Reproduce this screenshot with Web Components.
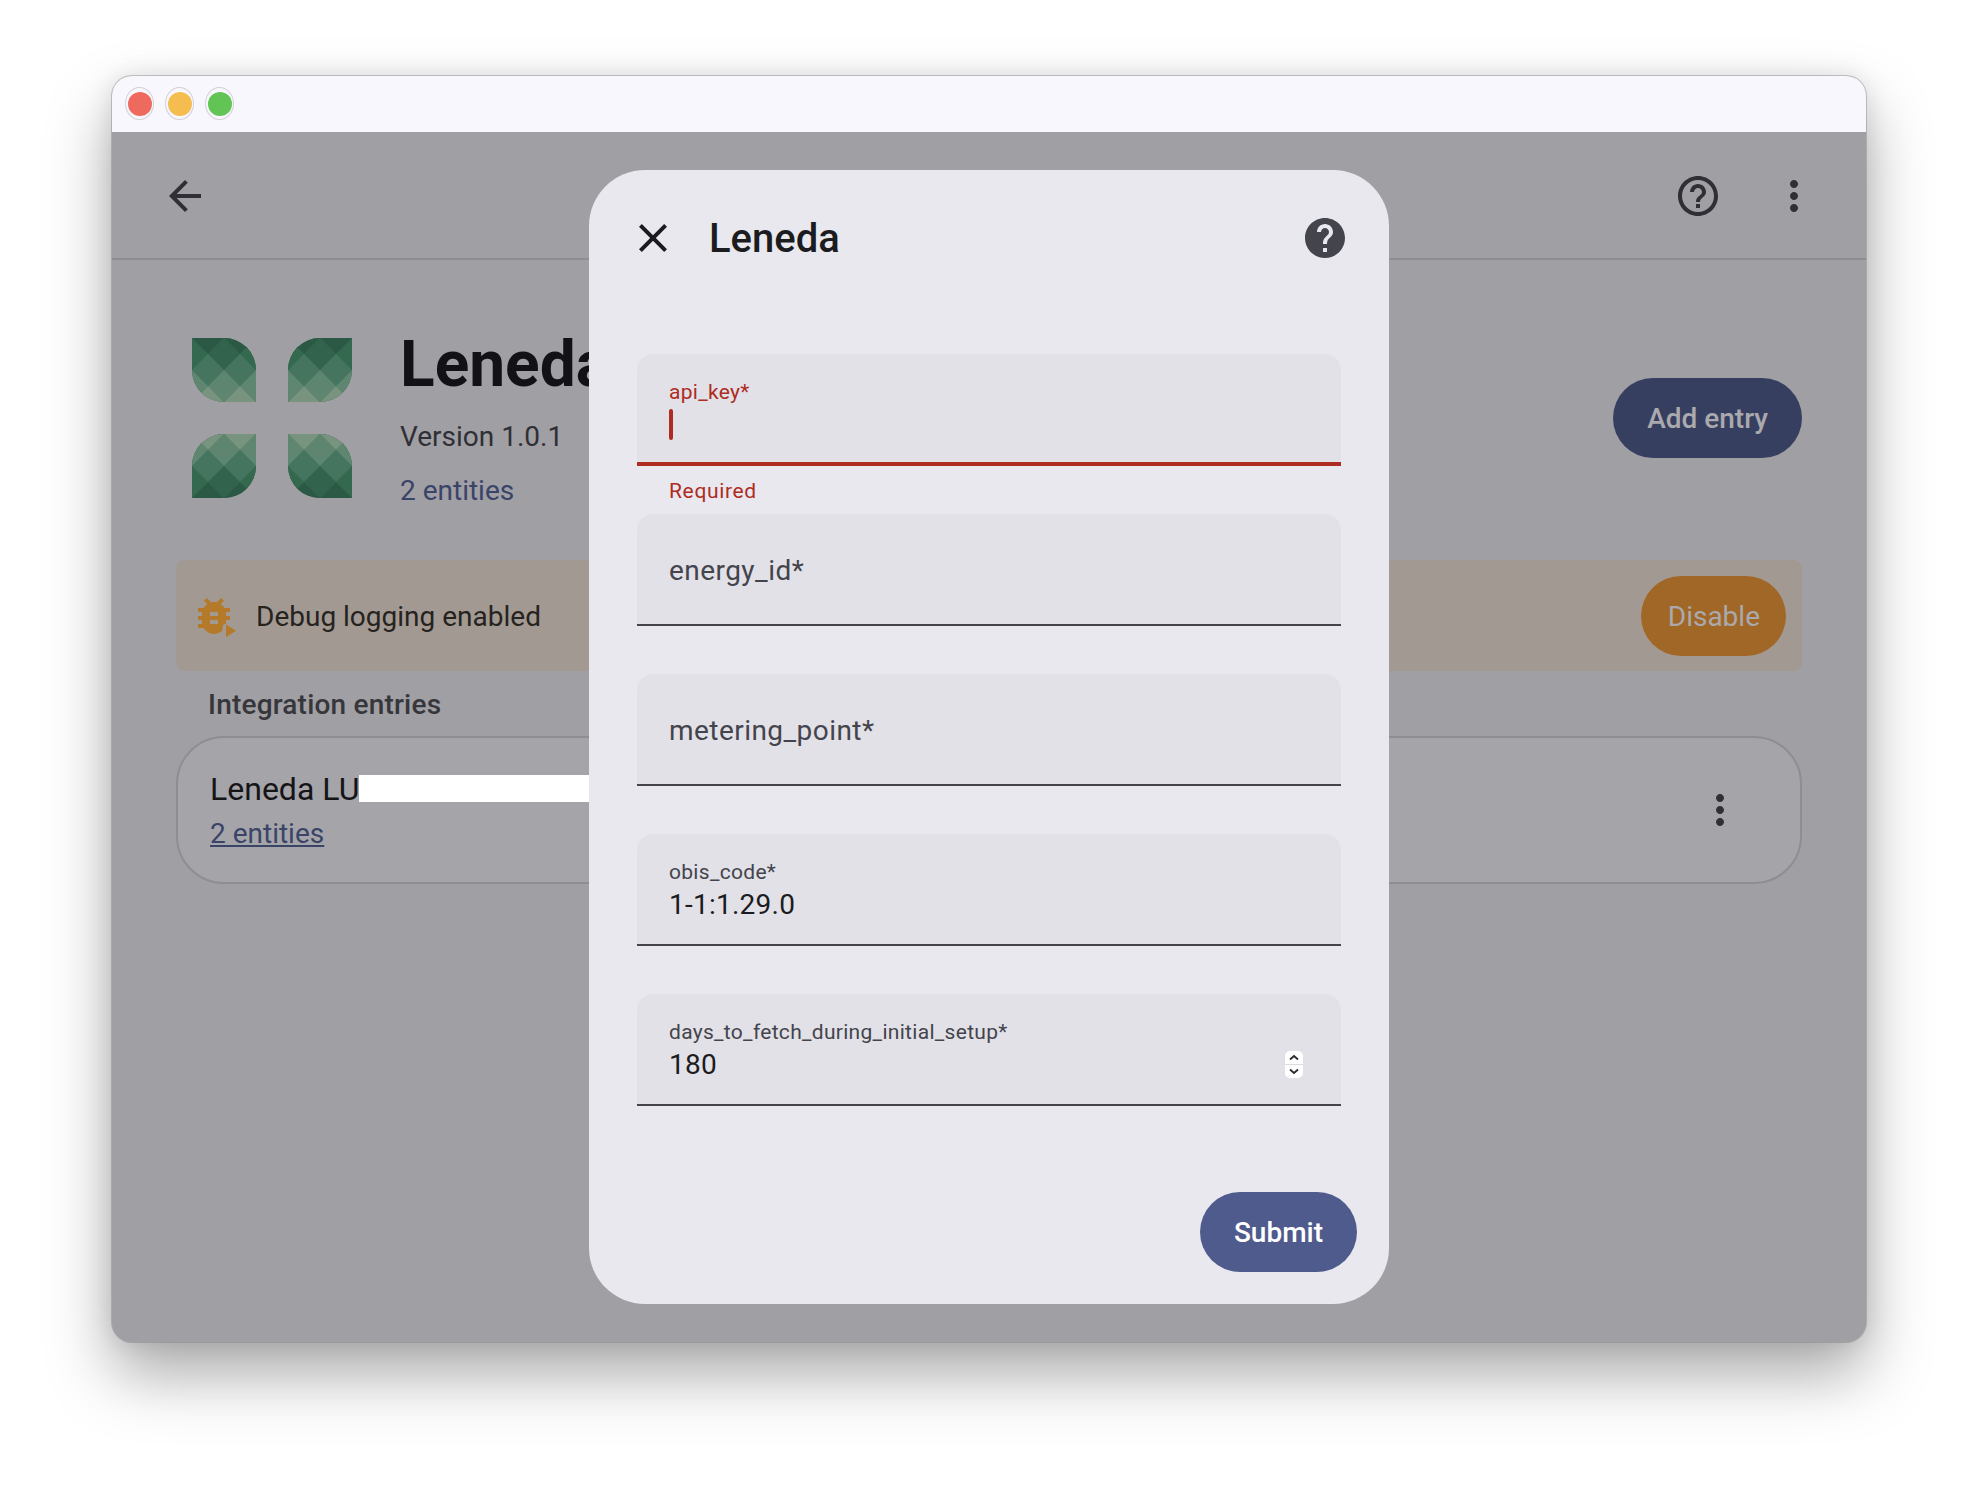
<!DOCTYPE html>
<html>
<head>
<meta charset="utf-8">
<title>Leneda</title>
<style>
  html, body { margin: 0; background: #fff; }
  body {
    padding: 76px 112px 0;
    height: 1414px;
    overflow: hidden;
    font-family: Roboto, "Liberation Sans", sans-serif;
  }
</style>
</head>
<body>
<window-frame>
  <app-header></app-header>
  <integration-page></integration-page>
  <config-dialog slot="overlay"></config-dialog>
</window-frame>

<script>
const ICONS = {
  back: 'M20 11H7.83l5.59-5.59L12 4l-8 8 8 8 1.41-1.41L7.83 13H20v-2z',
  close: 'M19 6.41L17.59 5 12 10.59 6.41 5 5 6.41 10.59 12 5 17.59 6.41 19 12 13.41 17.59 19 19 17.59 13.41 12z',
  help: 'M12 2C6.48 2 2 6.48 2 12s4.48 10 10 10 10-4.48 10-10S17.52 2 12 2zm1 17h-2v-2h2v2zm2.07-7.75l-.9.92C13.45 12.9 13 13.5 13 15h-2v-.5c0-1.1.45-2.1 1.17-2.83l1.24-1.26c.37-.36.59-.86.59-1.41 0-1.1-.9-2-2-2s-2 .9-2 2H8c0-2.21 1.79-4 4-4s4 1.79 4 4c0 .88-.36 1.68-.93 2.25z',
  helpOutline: 'M11 18h2v-2h-2v2zm1-16C6.48 2 2 6.48 2 12s4.48 10 10 10 10-4.48 10-10S17.52 2 12 2zm0 18c-4.41 0-8-3.59-8-8s3.59-8 8-8 8 3.59 8 8-3.59 8-8 8zm0-14c-2.21 0-4 1.79-4 4h2c0-1.1.9-2 2-2s2 .9 2 2c0 2-3 1.75-3 5h2c0-2.25 3-2.5 3-5 0-2.21-1.79-4-4-4z',
  more: 'M12 8c1.1 0 2-.9 2-2s-.9-2-2-2-2 .9-2 2 .9 2 2 2zm0 2c-1.1 0-2 .9-2 2s.9 2 2 2 2-.9 2-2-.9-2-2-2zm0 6c-1.1 0-2 .9-2 2s.9 2 2 2 2-.9 2-2-.9-2-2-2z'
};

customElements.define(
  "m-icon",
  class MIcon extends HTMLElement {
    constructor() {
      super();
      this.attachShadow({mode: "open"});
    }
    connectedCallback() {
      this.shadowRoot.innerHTML = `
        <style>
          :host { display: block; width: 48px; height: 48px; flex: none; }
          svg { display: block; width: 100%; height: 100%; fill: currentColor; }
        </style>
        <svg viewBox="0 0 24 24"><path d="${ICONS[this.getAttribute("name")]}"></path></svg>
      `;
    }
  }
);

customElements.define(
  "window-frame",
  class WindowFrame extends HTMLElement {
    constructor() {
      super();
      this.attachShadow({mode: "open"});
    }
    connectedCallback() {
      this.shadowRoot.innerHTML = `
        <style>
          :host {
            display: flex;
            flex-direction: column;
            position: relative;
            width: 1754px;
            height: 1266px;
            border-radius: 20px;
            overflow: hidden;
            background: #a09fa4;
            box-shadow: 0 0 0 1px rgba(120, 120, 120, 0.4), 0 32px 64px rgba(0, 0, 0, 0.34), 0 0 24px rgba(0, 0, 0, 0.1);
          }
          .bar { display: flex; align-items: center; gap: 11px; flex: none; height: 56px; padding: 0 0 1px 13px; box-sizing: border-box; background: #f9f7fe; }
          .light { display: flex; align-items: center; justify-content: center; box-sizing: border-box; width: 29px; height: 33px; border: 1px solid #d2d1d5; border-radius: 50%; }
          .light i { display: block; width: 24px; height: 24px; border-radius: 50%; }
          .r { background: #ee6a5f; }
          .y { background: #f5bd4f; }
          .g { background: #61c454; }
        </style>
        <div class="bar">
          <span class="light"><i class="r"></i></span>
          <span class="light"><i class="y"></i></span>
          <span class="light"><i class="g"></i></span>
        </div>
        <slot></slot>
        <slot name="overlay"></slot>
      `;
    }
  }
);

customElements.define(
  "app-header",
  class AppHeader extends HTMLElement {
    constructor() {
      super();
      this.attachShadow({mode: "open"});
    }
    connectedCallback() {
      this.shadowRoot.innerHTML = `
        <style>
          :host {
            display: flex;
            align-items: center;
            gap: 48px;
            flex: none;
            box-sizing: border-box;
            height: 128px;
            padding: 2px 48px 0 49px;
            border-bottom: 2px solid #8e8d93;
            color: #2f2f35;
          }
          .back { margin-right: auto; }
        </style>
        <m-icon class="back" name="back"></m-icon>
        <m-icon name="helpOutline"></m-icon>
        <m-icon name="more"></m-icon>
      `;
    }
  }
);

customElements.define(
  "leaf-logo",
  class LeafLogo extends HTMLElement {
    constructor() {
      super();
      this.attachShadow({mode: "open"});
    }
    connectedCallback() {
      this.shadowRoot.innerHTML = `
        <style>
          :host { display: block; width: 160px; height: 160px; flex: none; }
          svg { display: block; }
        </style>
        <svg width="160" height="160" viewBox="0 0 160 160">
          <defs>
            <clipPath id="leaf-clip"><path d="M0 0H32A32 32 0 0 1 64 32V64H32A32 32 0 0 1 0 32Z"></path></clipPath>
            <g id="leaf" clip-path="url(#leaf-clip)">
              <rect width="64" height="64" fill="#32644e"></rect>
              <path d="M0 0H32L16 16ZM32 0H64L48 16Z" fill="#2c5945"></path>
              <path d="M32 0L48 16 32 32 16 16Z" fill="#31634d"></path>
              <path d="M64 0L48 16 64 32Z M0 0L16 16 0 32Z" fill="#34684f"></path>
              <path d="M16 16L32 32 16 48 0 32ZM48 16L64 32 48 48 32 32Z" fill="#46755f"></path>
              <path d="M32 32L48 48 32 64 16 48Z" fill="#5e856f"></path>
              <path d="M0 32L16 48 0 64ZM64 32L48 48 64 64Z" fill="#5f8670"></path>
              <path d="M0 64L16 48 32 64ZM32 64L48 48 64 64Z" fill="#78947f"></path>
            </g>
          </defs>
          <use href="#leaf"></use>
          <use href="#leaf" transform="translate(160 0) scale(-1 1)"></use>
          <use href="#leaf" transform="translate(0 160) scale(1 -1)"></use>
          <use href="#leaf" transform="translate(160 160) scale(-1 -1)"></use>
        </svg>
      `;
    }
  }
);

customElements.define(
  "pill-button",
  class PillButton extends HTMLElement {
    constructor() {
      super();
      this.attachShadow({mode: "open"});
    }
    connectedCallback() {
      this.shadowRoot.innerHTML = `
        <style>
          :host {
            display: inline-flex;
            align-items: center;
            flex: none;
            box-sizing: border-box;
            height: 80px;
            padding: 2px 34px 0;
            border-radius: 40px;
            font: 500 28px/36px Roboto, sans-serif;
            color: var(--pill-text, #fff);
            background: var(--pill-bg, #4f5b8c);
          }
        </style>
        <slot></slot>
      `;
    }
  }
);

customElements.define(
  "debug-banner",
  class DebugBanner extends HTMLElement {
    constructor() {
      super();
      this.attachShadow({mode: "open"});
    }
    connectedCallback() {
      this.shadowRoot.innerHTML = `
        <style>
          :host {
            display: flex;
            align-items: center;
            box-sizing: border-box;
            height: 111px;
            padding: 0 16px 0 14px;
            border-radius: 8px;
            background: #a29a92;
            color: #26231f;
            font: 400 28px/40px Roboto, sans-serif;
          }
          svg { display: block; flex: none; width: 48px; height: 48px; margin-right: 18px; fill: #b47a2a; }
          span { flex: 1; padding-top: 2px; }
          pill-button { --pill-bg: #a16727; --pill-text: #aaa9ae; padding: 2px 26px 0 27px; font-weight: 400; }
        </style>
        <svg viewBox="0 0 24 24">
          <path d="M14,12H10V10H14M14,16H10V14H14M20,8H17.19C16.74,7.22 16.12,6.55 15.37,6.04L17,4.41L15.59,3L13.42,5.17C12.96,5.06 12.5,5 12,5C11.5,5 11.04,5.06 10.59,5.17L8.41,3L7,4.41L8.62,6.04C7.88,6.55 7.26,7.22 6.81,8H4V10H6.09C6.04,10.33 6,10.66 6,11V12H4V14H6V15C6,15.34 6.04,15.67 6.09,16H4V18H6.81C8.47,20.87 12.14,21.84 15,20.18C15.91,19.66 16.67,18.9 17.19,18H20V16H17.91C17.96,15.67 18,15.34 18,15V14H20V12H18V11C18,10.66 17.96,10.33 17.91,10H20V8Z"></path>
          <path d="M16.6 16.2L24 14.5V24H15.5L16.2 19Z" fill="#a29a92"></path>
          <path d="M18 16.2V22.6L23 19.4Z"></path>
        </svg>
        <span>Debug logging enabled</span>
        <pill-button>Disable</pill-button>
      `;
    }
  }
);

customElements.define(
  "entry-card",
  class EntryCard extends HTMLElement {
    constructor() {
      super();
      this.attachShadow({mode: "open"});
    }
    connectedCallback() {
      this.shadowRoot.innerHTML = `
        <style>
          :host {
            display: flex;
            align-items: center;
            justify-content: space-between;
            box-sizing: border-box;
            height: 148px;
            padding: 0 56px 0 32px;
            border: 2px solid #8e8d93;
            border-radius: 48px;
            background: #a5a4a9;
            color: #2f2f35;
          }
          .text { margin-top: 1px; }
          .name { font: 400 32px/44px Roboto, sans-serif; color: #151518; white-space: nowrap; }
          .mask { display: inline-block; width: 230px; height: 27px; background: #fff; vertical-align: -2px; }
          .link { margin-top: 3px; font: 400 28px/40px Roboto, sans-serif; color: #3a4468; text-decoration: underline; }
        </style>
        <div class="text">
          <div class="name">Leneda LU<span class="mask"></span></div>
          <div class="link">2 entities</div>
        </div>
        <m-icon name="more"></m-icon>
      `;
    }
  }
);

customElements.define(
  "integration-page",
  class IntegrationPage extends HTMLElement {
    constructor() {
      super();
      this.attachShadow({mode: "open"});
    }
    connectedCallback() {
      this.shadowRoot.innerHTML = `
        <style>
          :host { display: block; padding: 69px 64px 0 64px; }
          .top { display: flex; align-items: flex-start; padding-left: 16px; margin-bottom: 49px; }
          leaf-logo { margin: 9px 48px 0 0; }
          .info { flex: 1; }
          h1 { margin: 0 0 16px; font: 700 64px/72px Roboto, sans-serif; color: #121216; }
          .version { font: 400 28px/40px Roboto, sans-serif; color: #2f2f35; margin-bottom: 14px; }
          .count { font: 400 28px/40px Roboto, sans-serif; color: #3a4468; }
          .add { margin-top: 49px; --pill-bg: #373f60; --pill-text: #aaa9ae; font-weight: 500; }
          h2 { margin: 14px 0 11px 32px; font: 500 28px/40px Roboto, sans-serif; letter-spacing: 0.2px; color: #36363b; }
        </style>
        <div class="top">
          <leaf-logo></leaf-logo>
          <div class="info">
            <h1>Leneda</h1>
            <div class="version">Version 1.0.1</div>
            <div class="count">2 entities</div>
          </div>
          <pill-button class="add">Add entry</pill-button>
        </div>
        <debug-banner></debug-banner>
        <h2>Integration entries</h2>
        <entry-card></entry-card>
      `;
    }
  }
);

customElements.define(
  "form-field",
  class FormField extends HTMLElement {
    constructor() {
      super();
      this.attachShadow({mode: "open"});
    }
    connectedCallback() {
      const label = this.getAttribute("label");
      const value = this.getAttribute("value");
      const error = this.getAttribute("error");
      const spin = this.hasAttribute("spinner");
      let inner;
      if (error) {
        inner = `<div class="small">${label}</div><div class="row"><i class="caret"></i></div>`;
      } else if (value === null) {
        inner = `<div class="rest">${label}</div>`;
      } else {
        inner = `<div class="small">${label}</div><div class="row"><span>${value}</span>${spin ? this.spinner() : ""}</div>`;
      }
      this.shadowRoot.innerHTML = `
        <style>
          :host { display: block; height: 160px; font-family: Roboto, sans-serif; --tone: ${error ? "#ae2c22" : "#44444c"}; }
          .box {
            box-sizing: border-box;
            height: 112px;
            padding: 26px 38px 0 32px;
            border-radius: 16px 16px 0 0;
            border-bottom: ${error ? 4 : 2}px solid var(--tone);
            background: #e1e1e7;
          }
          .small { font-size: 21px; line-height: 24px; color: var(--tone); letter-spacing: 0.3px; }
          .rest { font-size: 28px; line-height: 36px; margin-top: 13px; color: #44444c; letter-spacing: 0.45px; }
          .row { display: flex; align-items: center; justify-content: space-between; height: 36px; margin-top: 2px; font-size: 28px; color: #1b1b20; letter-spacing: 0.25px; }
          .caret { display: block; width: 4px; height: 31px; border-radius: 2px; background: var(--tone); }
          .help { margin: 13px 0 0 32px; font-size: 21px; line-height: 24px; color: var(--tone); letter-spacing: 0.65px; }
          .spin { display: block; width: 18px; height: 27px; }
        </style>
        <div class="box">${inner}</div>
        ${error ? `<div class="help">${error}</div>` : ""}
      `;
    }
    spinner() {
      return `<svg class="spin" viewBox="0 0 18 27">
        <rect width="18" height="27" rx="5" fill="#fff"></rect>
        <rect y="13" width="18" height="1" fill="#dcdcdf"></rect>
        <path d="M5 8.5L9 5l4 3.5M5 18.5L9 22l4-3.5" fill="none" stroke="#2a2a30" stroke-width="1.8"></path>
      </svg>`;
    }
  }
);

customElements.define(
  "config-dialog",
  class ConfigDialog extends HTMLElement {
    constructor() {
      super();
      this.attachShadow({mode: "open"});
    }
    connectedCallback() {
      this.shadowRoot.innerHTML = `
        <style>
          :host {
            display: block;
            position: absolute;
            left: 477px;
            top: 94px;
            box-sizing: border-box;
            width: 800px;
            height: 1134px;
            padding-top: 44px;
            border-radius: 56px;
            background: #e8e8ee;
            font-family: Roboto, sans-serif;
          }
          header { display: flex; align-items: center; height: 48px; padding: 0 40px; margin-bottom: 92px; color: #1b1b20; }
          h2 { flex: 1; margin: 0 0 0 32px; padding-top: 2px; font: 500 40px/46px Roboto, sans-serif; }
          .tip { color: #44444c; }
          .fields { padding: 0 48px; }
          footer { display: flex; justify-content: flex-end; padding-right: 32px; margin-top: 38px; }
        </style>
        <header>
          <m-icon name="close"></m-icon>
          <h2>Leneda</h2>
          <m-icon class="tip" name="help"></m-icon>
        </header>
        <div class="fields">
          <form-field label="api_key*" error="Required"></form-field>
          <form-field label="energy_id*"></form-field>
          <form-field label="metering_point*"></form-field>
          <form-field label="obis_code*" value="1-1:1.29.0"></form-field>
          <form-field label="days_to_fetch_during_initial_setup*" value="180" spinner></form-field>
        </div>
        <footer><pill-button>Submit</pill-button></footer>
      `;
    }
  }
);
</script>
</body>
</html>
